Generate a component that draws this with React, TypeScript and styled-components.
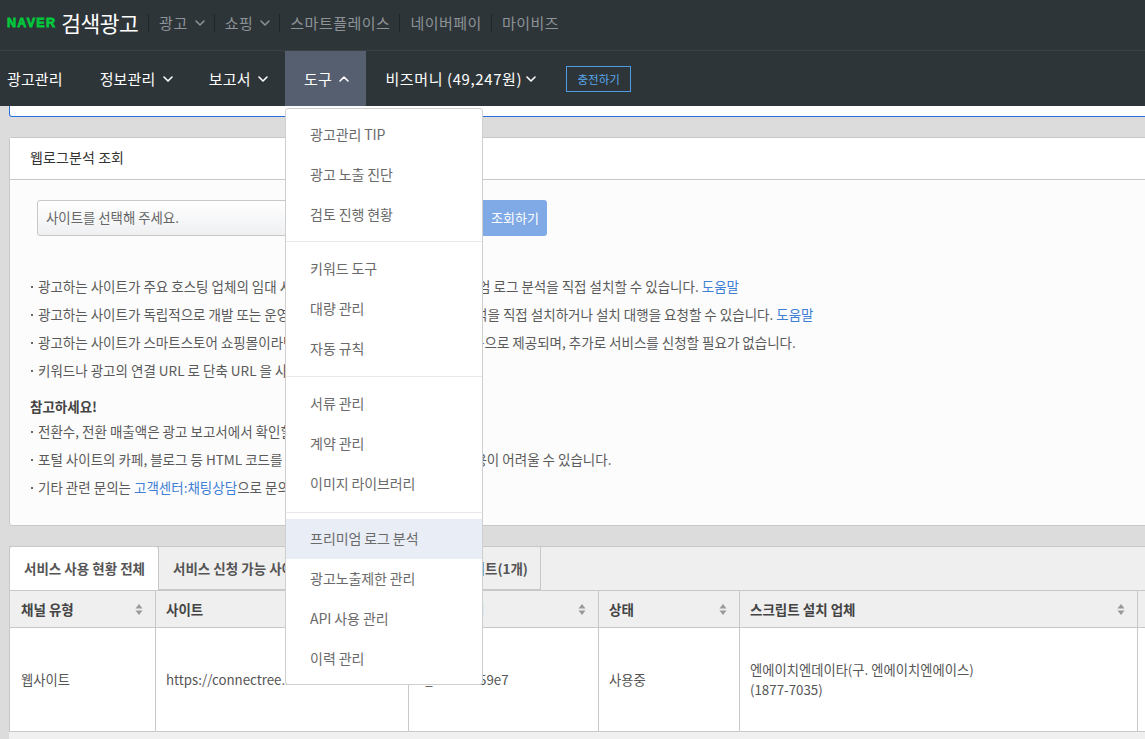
import React from 'react';
import styled, { createGlobalStyle } from 'styled-components';
import { ChevronDown, ChevronUp } from 'lucide-react';

const FONT = `"Noto Sans CJK KR", "Noto Sans", Roboto, sans-serif`;

const GlobalStyle = createGlobalStyle`
  html, body {
    margin: 0;
    padding: 0;
    height: 739px;
    overflow: hidden;
    background: #dcdcdc;
  }
  body {
    font-family: ${FONT};
    font-size: 13px;
    color: #555;
  }
  * { box-sizing: border-box; }
`;

const TOP_MENU = [
  { label: '광고', arrow: true },
  { label: '쇼핑', arrow: true },
  { label: '스마트플레이스' },
  { label: '네이버페이' },
  { label: '마이비즈' },
];

const TOOL_GROUPS = [
  ['광고관리 TIP', '광고 노출 진단', '검토 진행 현황'],
  ['키워드 도구', '대량 관리', '자동 규칙'],
  ['서류 관리', '계약 관리', '이미지 라이브러리'],
  ['프리미엄 로그 분석', '광고노출제한 관리', 'API 사용 관리', '이력 관리'],
];

const COLUMNS = [
  { title: '채널 유형', width: 146 },
  { title: '사이트', width: 253 },
  { title: '스크립트 키', width: 190 },
  { title: '상태', width: 141 },
  { title: '스크립트 설치 업체', width: 398 },
];

const App = () => {
  return (
    <>
      <GlobalStyle />
      <Header>
        <TopBar>
          <Logo>
            <NaverMark>NAVER</NaverMark>
            <LogoTitle>검색광고</LogoTitle>
          </Logo>
          {TOP_MENU.map((m) => (
            <TopItem key={m.label}>
              {m.label}
              {m.arrow && <ChevronDown size={16} strokeWidth={2.2} />}
            </TopItem>
          ))}
        </TopBar>
        <NavBar>
          <NavItem>광고관리</NavItem>
          <NavItem>
            정보관리 <ChevronDown size={16} strokeWidth={2.4} />
          </NavItem>
          <NavItem>
            보고서 <ChevronDown size={16} strokeWidth={2.4} />
          </NavItem>
          <NavItem $open>
            도구 <ChevronUp size={16} strokeWidth={2.4} />
            <Dropdown>
              {TOOL_GROUPS.map((group, i) => (
                <DropGroup key={i}>
                  {group.map((label) => (
                    <DropItem key={label} $active={label === '프리미엄 로그 분석'}>
                      {label}
                    </DropItem>
                  ))}
                </DropGroup>
              ))}
            </Dropdown>
          </NavItem>
          <NavItem>
            <Money>비즈머니 (49,247원)</Money> <ChevronDown size={16} strokeWidth={2.4} />
          </NavItem>
          <ChargeButton>충전하기</ChargeButton>
        </NavBar>
      </Header>
      <Content>
        <CutBox />
        <Card>
          <CardTitle>웹로그분석 조회</CardTitle>
          <CardBody>
            <SearchRow>
              <SiteSelect>사이트를 선택해 주세요.</SiteSelect>
              <SearchButton>조회하기</SearchButton>
            </SearchRow>
            <NoteList>
              <Note>
                광고하는 사이트가 주요 호스팅 업체의 임대 사이트를 이용 중이라면 바로 프리미엄 로그 분석을 직접 설치할 수 있습니다. <HelpLink>도움말</HelpLink>
              </Note>
              <Note>
                광고하는 사이트가 독립적으로 개발 또는 운영되는 사이트라면 프리미엄 로그 분석을 직접 설치하거나 설치 대행을 요청할 수 있습니다. <HelpLink>도움말</HelpLink>
              </Note>
              <Note>
                광고하는 사이트가 스마트스토어 쇼핑몰이라면 별도로 프리미엄 로그 분석이 자동으로 제공되며, 추가로 서비스를 신청할 필요가 없습니다.
              </Note>
              <Note>키워드나 광고의 연결 URL 로 단축 URL 을 사용하면 분석이 어렵습니다.</Note>
            </NoteList>
            <NoteTitle>참고하세요!</NoteTitle>
            <NoteList>
              <Note>전환수, 전환 매출액은 광고 보고서에서 확인할 수 있습니다.</Note>
              <Note>포털 사이트의 카페, 블로그 등 HTML 코드를 수정할 수 없는 사이트는 서비스 이용이 어려울 수 있습니다.</Note>
              <Note>
                기타 관련 문의는 <HelpLink>고객센터:채팅상담</HelpLink>으로 문의해 주세요.
              </Note>
            </NoteList>
          </CardBody>
        </Card>
        <TablePanel>
          <Tabs>
            <Tab $active>서비스 사용 현황 전체</Tab>
            <Tab>서비스 신청 가능 사이트(0개)</Tab>
            <Tab>서비스 사용 중인 사이트(1개)</Tab>
          </Tabs>
          <Table>
            <colgroup>
              {COLUMNS.map((c) => (
                <col key={c.title} style={{ width: c.width }} />
              ))}
              <col />
            </colgroup>
            <thead>
              <tr>
                {COLUMNS.map((c) => (
                  <HeadCell key={c.title}>
                    <HeadInner>
                      {c.title}
                      <svg width="8" height="11" viewBox="0 0 8 11">
                        <path d="M4 0 L7.5 4.4 H0.5 Z M4 11 L0.5 6.6 H7.5 Z" fill="#999" />
                      </svg>
                    </HeadInner>
                  </HeadCell>
                ))}
                <HeadCell />
              </tr>
            </thead>
            <tbody>
              <tr>
                <BodyCell>웹사이트</BodyCell>
                <BodyCell>https://connectree.net</BodyCell>
                <BodyCell>s_2f3bf1759e7</BodyCell>
                <BodyCell>사용중</BodyCell>
                <BodyCell>
                  엔에이치엔데이타(구. 엔에이치엔에이스)
                  <br />
                  (1877-7035)
                </BodyCell>
                <BodyCell />
              </tr>
            </tbody>
          </Table>
        </TablePanel>
      </Content>
    </>
  );
};

export default App;

const Header = styled.header`
  height: 106px;
  background: #2e3539;
`;

const TopBar = styled.div`
  height: 51px;
  display: flex;
  align-items: center;
  padding: 0 0 5px 7px;
  border-bottom: 1px solid #3a4145;
`;

const Logo = styled.div`
  display: flex;
  align-items: center;
  gap: 5px;
  padding-right: 10px;
`;

const NaverMark = styled.span`
  font-family: "Liberation Sans", Arial, sans-serif;
  font-size: 12.5px;
  font-weight: 700;
  color: #00c73c;
  -webkit-text-stroke: 0.8px #00c73c;
  letter-spacing: 1.3px;
`;

const LogoTitle = styled.span`
  font-size: 21.5px;
  font-weight: 400;
  color: #fff;
  letter-spacing: -0.6px;
`;

const TopItem = styled.span`
  height: 18px;
  display: flex;
  align-items: center;
  gap: 4px;
  padding: 0 9px 0 10px;
  border-left: 1px solid #1f2528;
  font-size: 15px;
  letter-spacing: 0.5px;
  color: #8d9396;
  white-space: nowrap;
  svg {
    margin-right: -3px;
    color: #8d9396;
  }
`;

const NavBar = styled.nav`
  height: 55px;
  display: flex;
  align-items: stretch;
  padding-left: 7px;
`;

const NavItem = styled.div<{ $open?: boolean }>`
  position: relative;
  display: flex;
  align-items: center;
  padding: 0 13px 0 19px;
  background: ${({ $open }) => ($open ? '#565f70' : 'transparent')};
  font-size: 15px;
  letter-spacing: 0.12px;
  color: #fff;
  white-space: pre;
  svg {
    margin: 0 1px;
  }
  &:first-child {
    padding: 0 18px 0 0;
  }
`;

const Money = styled.span`
  letter-spacing: 0.6px;
`;

const ChargeButton = styled.button`
  align-self: center;
  width: 65px;
  height: 26px;
  margin-left: 13px;
  padding: 0;
  border: 1px solid #4d9be0;
  background: transparent;
  font-family: ${FONT};
  font-size: 11.5px;
  color: #5aa7ee;
`;

const Dropdown = styled.div`
  position: absolute;
  z-index: 10;
  top: 57px;
  left: 0;
  width: 198px;
  background: #fff;
  border: 1px solid #cfcfcf;
  border-radius: 3px;
`;

const DropGroup = styled.div`
  padding: 7px 0 7px;
  border-bottom: 1px solid #e9e9e9;
  &:first-child {
    padding: 6px 0;
  }
  &:nth-child(3) {
    padding-bottom: 8px;
  }
  &:last-child {
    border-bottom: 0;
    padding: 6px 0 5px;
  }
`;

const DropItem = styled.div<{ $active?: boolean }>`
  height: 40px;
  line-height: 38px;
  padding-left: 24px;
  font-size: 14px;
  letter-spacing: -0.1px;
  color: #6a6a6a;
  background: ${({ $active }) => ($active ? '#e9edf5' : 'transparent')};
`;

const Content = styled.main`
  width: 1300px;
  padding-left: 9px;
`;

const CutBox = styled.div`
  height: 11px;
  background: #fff;
  border: 1px solid #2a6fdb;
  border-top: 0;
  border-radius: 0 0 3px 3px;
`;

const Card = styled.section`
  margin-top: 20px;
  height: 389px;
  border: 1px solid #c8c8c8;
  border-radius: 3px;
  background: #fcfcfc;
`;

const CardTitle = styled.h2`
  margin: 0;
  height: 42px;
  line-height: 39px;
  padding-left: 20px;
  background: #fff;
  border-bottom: 1px solid #c8c8c8;
  font-size: 14px;
  letter-spacing: 0.1px;
  font-weight: 400;
  color: #333;
`;

const CardBody = styled.div`
  padding: 20px 0 0 20px;
`;

const SearchRow = styled.div`
  display: flex;
  margin: 0 0 36px 7px;
`;

const SiteSelect = styled.div`
  width: 446px;
  height: 36px;
  line-height: 33px;
  padding-left: 8px;
  border: 1px solid #c8c8c8;
  border-radius: 3px 0 0 3px;
  background: linear-gradient(#ffffff, #eff0f2);
  font-size: 13.4px;
  color: #666;
`;

const SearchButton = styled.button`
  width: 64px;
  height: 36px;
  padding: 0 0 2px;
  border: 0;
  border-radius: 0 3px 3px 0;
  background: #80aae6;
  font-family: ${FONT};
  font-size: 13px;
  color: #fff;
`;

const NoteList = styled.ul`
  margin: 0;
  padding: 0;
  list-style: none;
`;

const Note = styled.li`
  height: 28px;
  line-height: 28px;
  padding-left: 8px;
  font-size: 13.5px;
  color: #5a5a5a;
  white-space: nowrap;
  position: relative;
  &::before {
    content: '';
    position: absolute;
    left: 1px;
    top: 14px;
    width: 2px;
    height: 2px;
    background: #666;
  }
`;

const HelpLink = styled.a`
  color: #3f7fd6;
`;

const NoteTitle = styled.h3`
  margin: 11px 0 0;
  height: 22px;
  line-height: 23px;
  font-size: 13.5px;
  font-weight: 700;
  color: #444;
`;

const TablePanel = styled.section`
  margin-top: 20px;
  background: #f0f0f0;
  height: 200px;
`;

const Tabs = styled.div`
  display: flex;
  height: 44px;
  background: #efefef;
  border-top: 1px solid #c8c8c8;
`;

const Tab = styled.div<{ $active?: boolean }>`
  height: ${({ $active }) => ($active ? '44px' : '43px')};
  margin-top: ${({ $active }) => ($active ? '-1px' : '0')};
  line-height: 43px;
  padding: 0 12px 0 14px;
  width: ${({ $active }) => ($active ? '150px' : 'auto')};
  background: ${({ $active }) => ($active ? '#fff' : '#efefef')};
  border: 1px solid #c8c8c8;
  border-width: ${({ $active }) => ($active ? '1px 1px 0 1px' : '0 1px 1px 0')};
  border-radius: ${({ $active }) => ($active ? '3px 3px 0 0' : '0')};
  font-size: 13.5px;
  font-weight: 600;
  color: #555;
  white-space: nowrap;
`;

const Table = styled.table`
  width: 1290px;
  table-layout: fixed;
  border-collapse: collapse;
`;

const HeadCell = styled.th`
  height: 37px;
  padding: 0 12px 0 10px;
  background: #efefef;
  border: 1px solid #c8c8c8;
  font-size: 13.5px;
  font-weight: 700;
  color: #444;
  text-align: left;
  &:first-child {
    padding-left: 11px;
  }
`;

const HeadInner = styled.div`
  display: flex;
  align-items: center;
  justify-content: space-between;
  white-space: nowrap;
`;

const BodyCell = styled.td`
  height: 104px;
  padding: 0 10px;
  background: #fff;
  border: 1px solid #c8c8c8;
  font-size: 13.3px;
  line-height: 20px;
  color: #555;
  white-space: nowrap;
  &:first-child {
    padding-left: 11px;
  }
`;
